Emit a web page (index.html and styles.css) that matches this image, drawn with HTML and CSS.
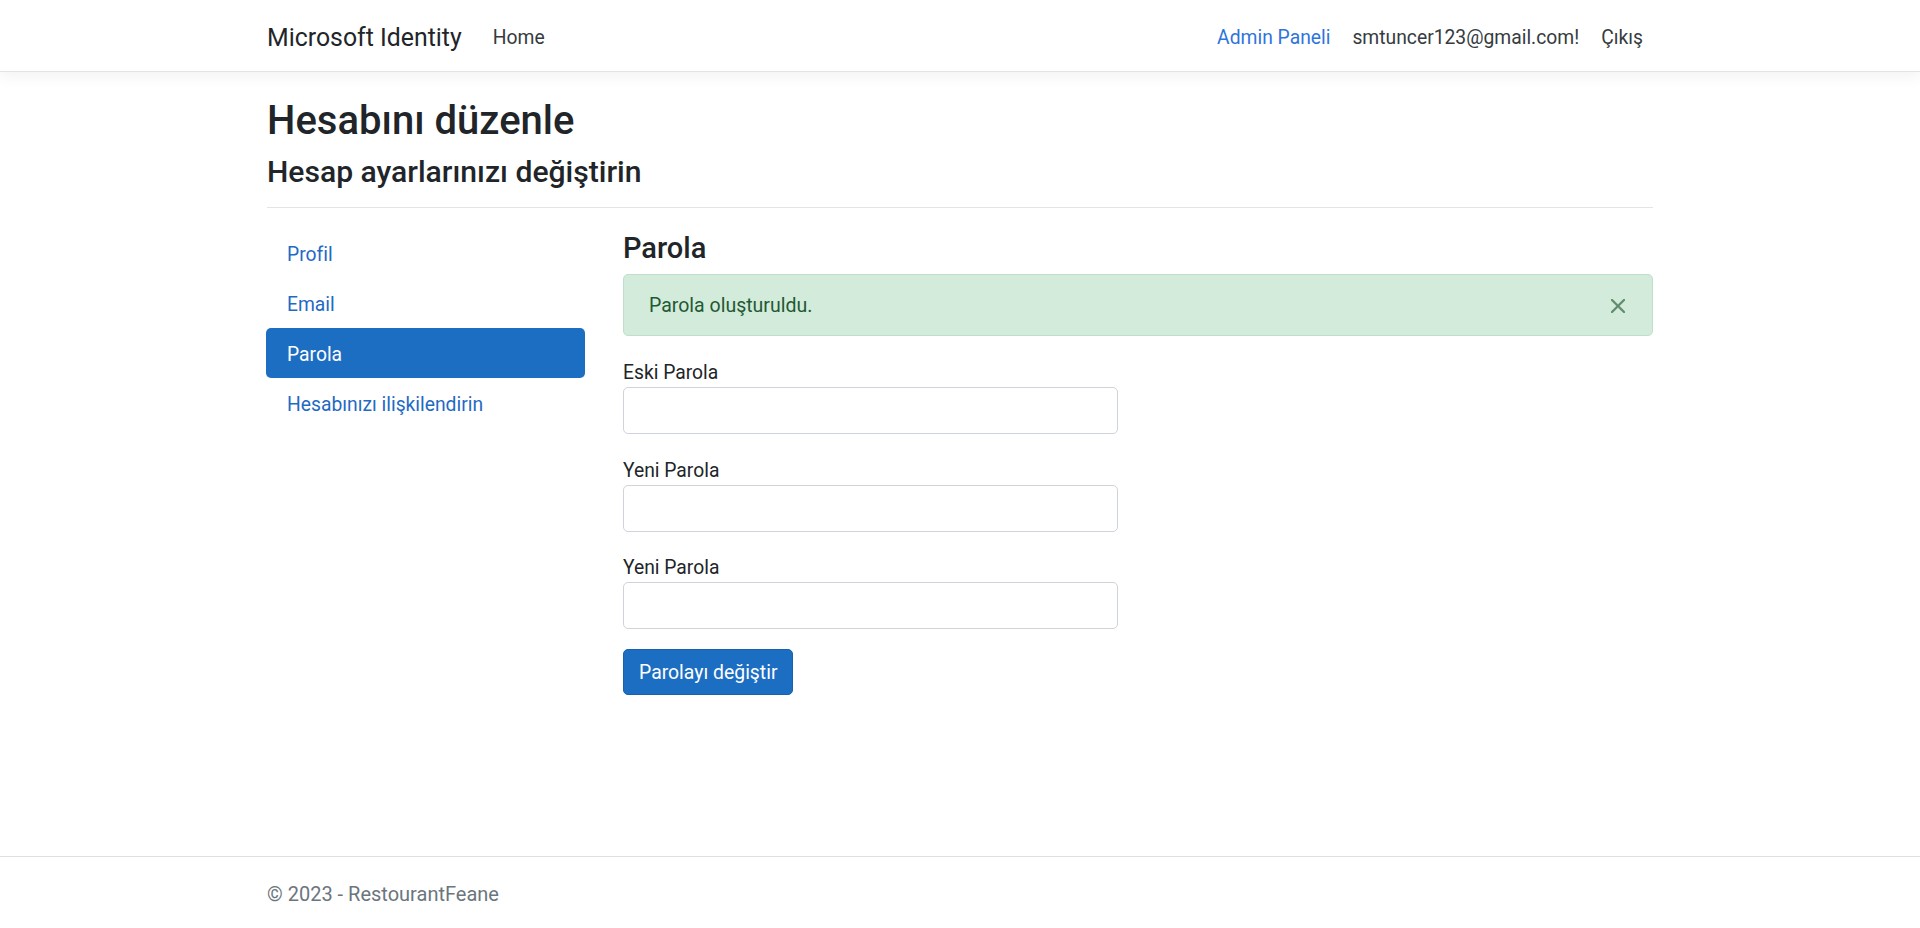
FILE: index.html
```html
<!DOCTYPE html>
<html lang="tr">
<head>
<meta charset="utf-8">
<title>Parola - Microsoft Identity</title>
<link rel="stylesheet" href="styles.css">
</head>
<body>
<header class="navbar">
  <div class="container nav-inner">
    <a class="brand" href="#">Microsoft Identity</a>
    <ul class="nav-left">
      <li><a class="nav-link" href="#">Home</a></li>
    </ul>
    <ul class="nav-right">
      <li><a class="nav-link admin" href="#">Admin Paneli</a></li>
      <li><a class="nav-link" href="#">smtuncer123@gmail.com!</a></li>
      <li><button class="nav-link logout" type="button">Çıkış</button></li>
    </ul>
  </div>
</header>

<main class="container page">
  <h1 class="title">Hesabını düzenle</h1>
  <h2 class="subtitle">Hesap ayarlarınızı değiştirin</h2>
  <hr class="divider">
  <div class="row">
    <nav class="side">
      <a class="side-link" href="#">Profil</a>
      <a class="side-link" href="#">Email</a>
      <a class="side-link active" href="#">Parola</a>
      <a class="side-link" href="#">Hesabınızı ilişkilendirin</a>
    </nav>
    <section class="content">
      <h3 class="section-title">Parola</h3>
      <div class="alert">
        <span class="alert-text">Parola oluşturuldu.</span>
        <button class="close" type="button" aria-label="Close">
          <svg viewBox="0 0 16 16" width="14" height="14"><path d="M.293.293a1 1 0 0 1 1.414 0L8 6.586 14.293.293a1 1 0 1 1 1.414 1.414L9.414 8l6.293 6.293a1 1 0 0 1-1.414 1.414L8 9.414l-6.293 6.293a1 1 0 0 1-1.414-1.414L6.586 8 .293 1.707a1 1 0 0 1 0-1.414z"/></svg>
        </button>
      </div>
      <form class="form">
        <div class="group">
          <label class="label">Eski Parola</label>
          <input class="input" type="password">
        </div>
        <div class="group">
          <label class="label">Yeni Parola</label>
          <input class="input" type="password">
        </div>
        <div class="group">
          <label class="label">Yeni Parola</label>
          <input class="input" type="password">
        </div>
        <button class="btn" type="button">Parolayı değiştir</button>
      </form>
    </section>
  </div>
</main>

<footer class="footer">
  <div class="container">© 2023 - RestourantFeane</div>
</footer>
</body>
</html>
```
FILE: styles.css
```css
* { box-sizing: border-box; }

html, body { margin: 0; padding: 0; }

body {
  font-family: Roboto, "Noto Sans", Arial, sans-serif;
  font-size: 19.3px;
  color: #212529;
  background: #fff;
  min-height: 100vh;
  display: flex;
  flex-direction: column;
}

a { text-decoration: none; }

.container {
  width: 1386px;
  margin: 0 auto;
}

/* Navbar */
.navbar {
  height: 72px;
  border-bottom: 1px solid #e3e3e3;
  box-shadow: 0 5px 14px rgba(0, 0, 0, 0.05);
  background: #fff;
  position: relative;
  z-index: 1;
}

.nav-inner {
  height: 71px;
  padding-top: 4px;
  display: flex;
  align-items: center;
}

.brand {
  font-size: 24.85px;
  line-height: 37px;
  color: #212529;
}

.nav-left, .nav-right {
  list-style: none;
  margin: 0;
  padding: 0;
  display: flex;
  align-items: center;
}

.nav-left { margin-left: 31px; }

.nav-right {
  margin-left: auto;
  gap: 22px;
  padding-right: 10px;
}

.nav-link {
  display: block;
  font-family: inherit;
  font-size: 19.3px;
  line-height: 29px;
  color: #363b40;
}

.nav-link.admin { color: #2f74dc; }

.logout {
  background: none;
  border: 0;
  padding: 0;
  cursor: pointer;
}

/* Page header */
.page { padding-top: 25px; padding-bottom: 20px; }

.title {
  margin: 0;
  font-size: 40px;
  line-height: 48px;
  font-weight: 500;
}

.subtitle {
  margin: 9px 0 0;
  font-size: 30.1px;
  line-height: 36px;
  font-weight: 500;
}

.divider {
  margin: 17px 0 0;
  border: 0;
  border-top: 1px solid #e4e4e4;
  height: 0;
}

.row {
  display: flex;
  margin-top: 20px;
}

/* Side nav */
.side {
  width: 319px;
  margin-left: -1px;
  flex: none;
  display: flex;
  flex-direction: column;
}

.side-link {
  display: block;
  padding: 12px 21px 8px;
  line-height: 30px;
  border-radius: 5px;
  color: #1f6ac3;
}

.side-link.active {
  background: #1b6ec2;
  color: #fff;
}

/* Content */
.content {
  flex: 1;
  margin-left: 38px;
}

.section-title {
  margin: 3px 0 8px;
  font-size: 29px;
  line-height: 35px;
  font-weight: 500;
}

.alert {
  height: 62px;
  border: 1px solid #bfdfcb;
  background: #d3ebdb;
  color: #1f5a33;
  border-radius: 5px;
  padding: 1px 27px 0 25px;
  display: flex;
  align-items: center;
  justify-content: space-between;
  margin-bottom: 22px;
}

.alert-text { line-height: 59px; font-size: 19.5px; }

.close {
  background: none;
  border: 0;
  padding: 0;
  width: 14px;
  height: 14px;
  display: flex;
  cursor: pointer;
}

.close svg {
  fill: #4a7a57;
  stroke: #4a7a57;
  stroke-width: 0.7;
  opacity: 0.85;
}

/* Form */
.form { width: 495px; }

.group { margin-bottom: 21.5px; }

.group:nth-of-type(3) { margin-bottom: 20px; }

.label {
  display: block;
  line-height: 29px;
}

.input {
  display: block;
  width: 100%;
  height: 47px;
  border: 1px solid #ced4da;
  border-radius: 5px;
  background: #fff;
  font: inherit;
  padding: 0 14px;
}

.btn {
  height: 46px;
  padding: 0 15px;
  border: 1px solid #1861ac;
  border-radius: 5px;
  background: #1b6ec2;
  color: #fff;
  font-family: inherit;
  font-size: 19.4px;
  line-height: 29px;
  cursor: pointer;
}

/* Footer */
.footer {
  margin-top: auto;
  height: 72px;
  border-top: 1px solid #e0e0e0;
  padding-top: 4px;
  line-height: 67px;
  color: #6c757d;
  font-size: 20px;
  white-space: nowrap;
}
```
